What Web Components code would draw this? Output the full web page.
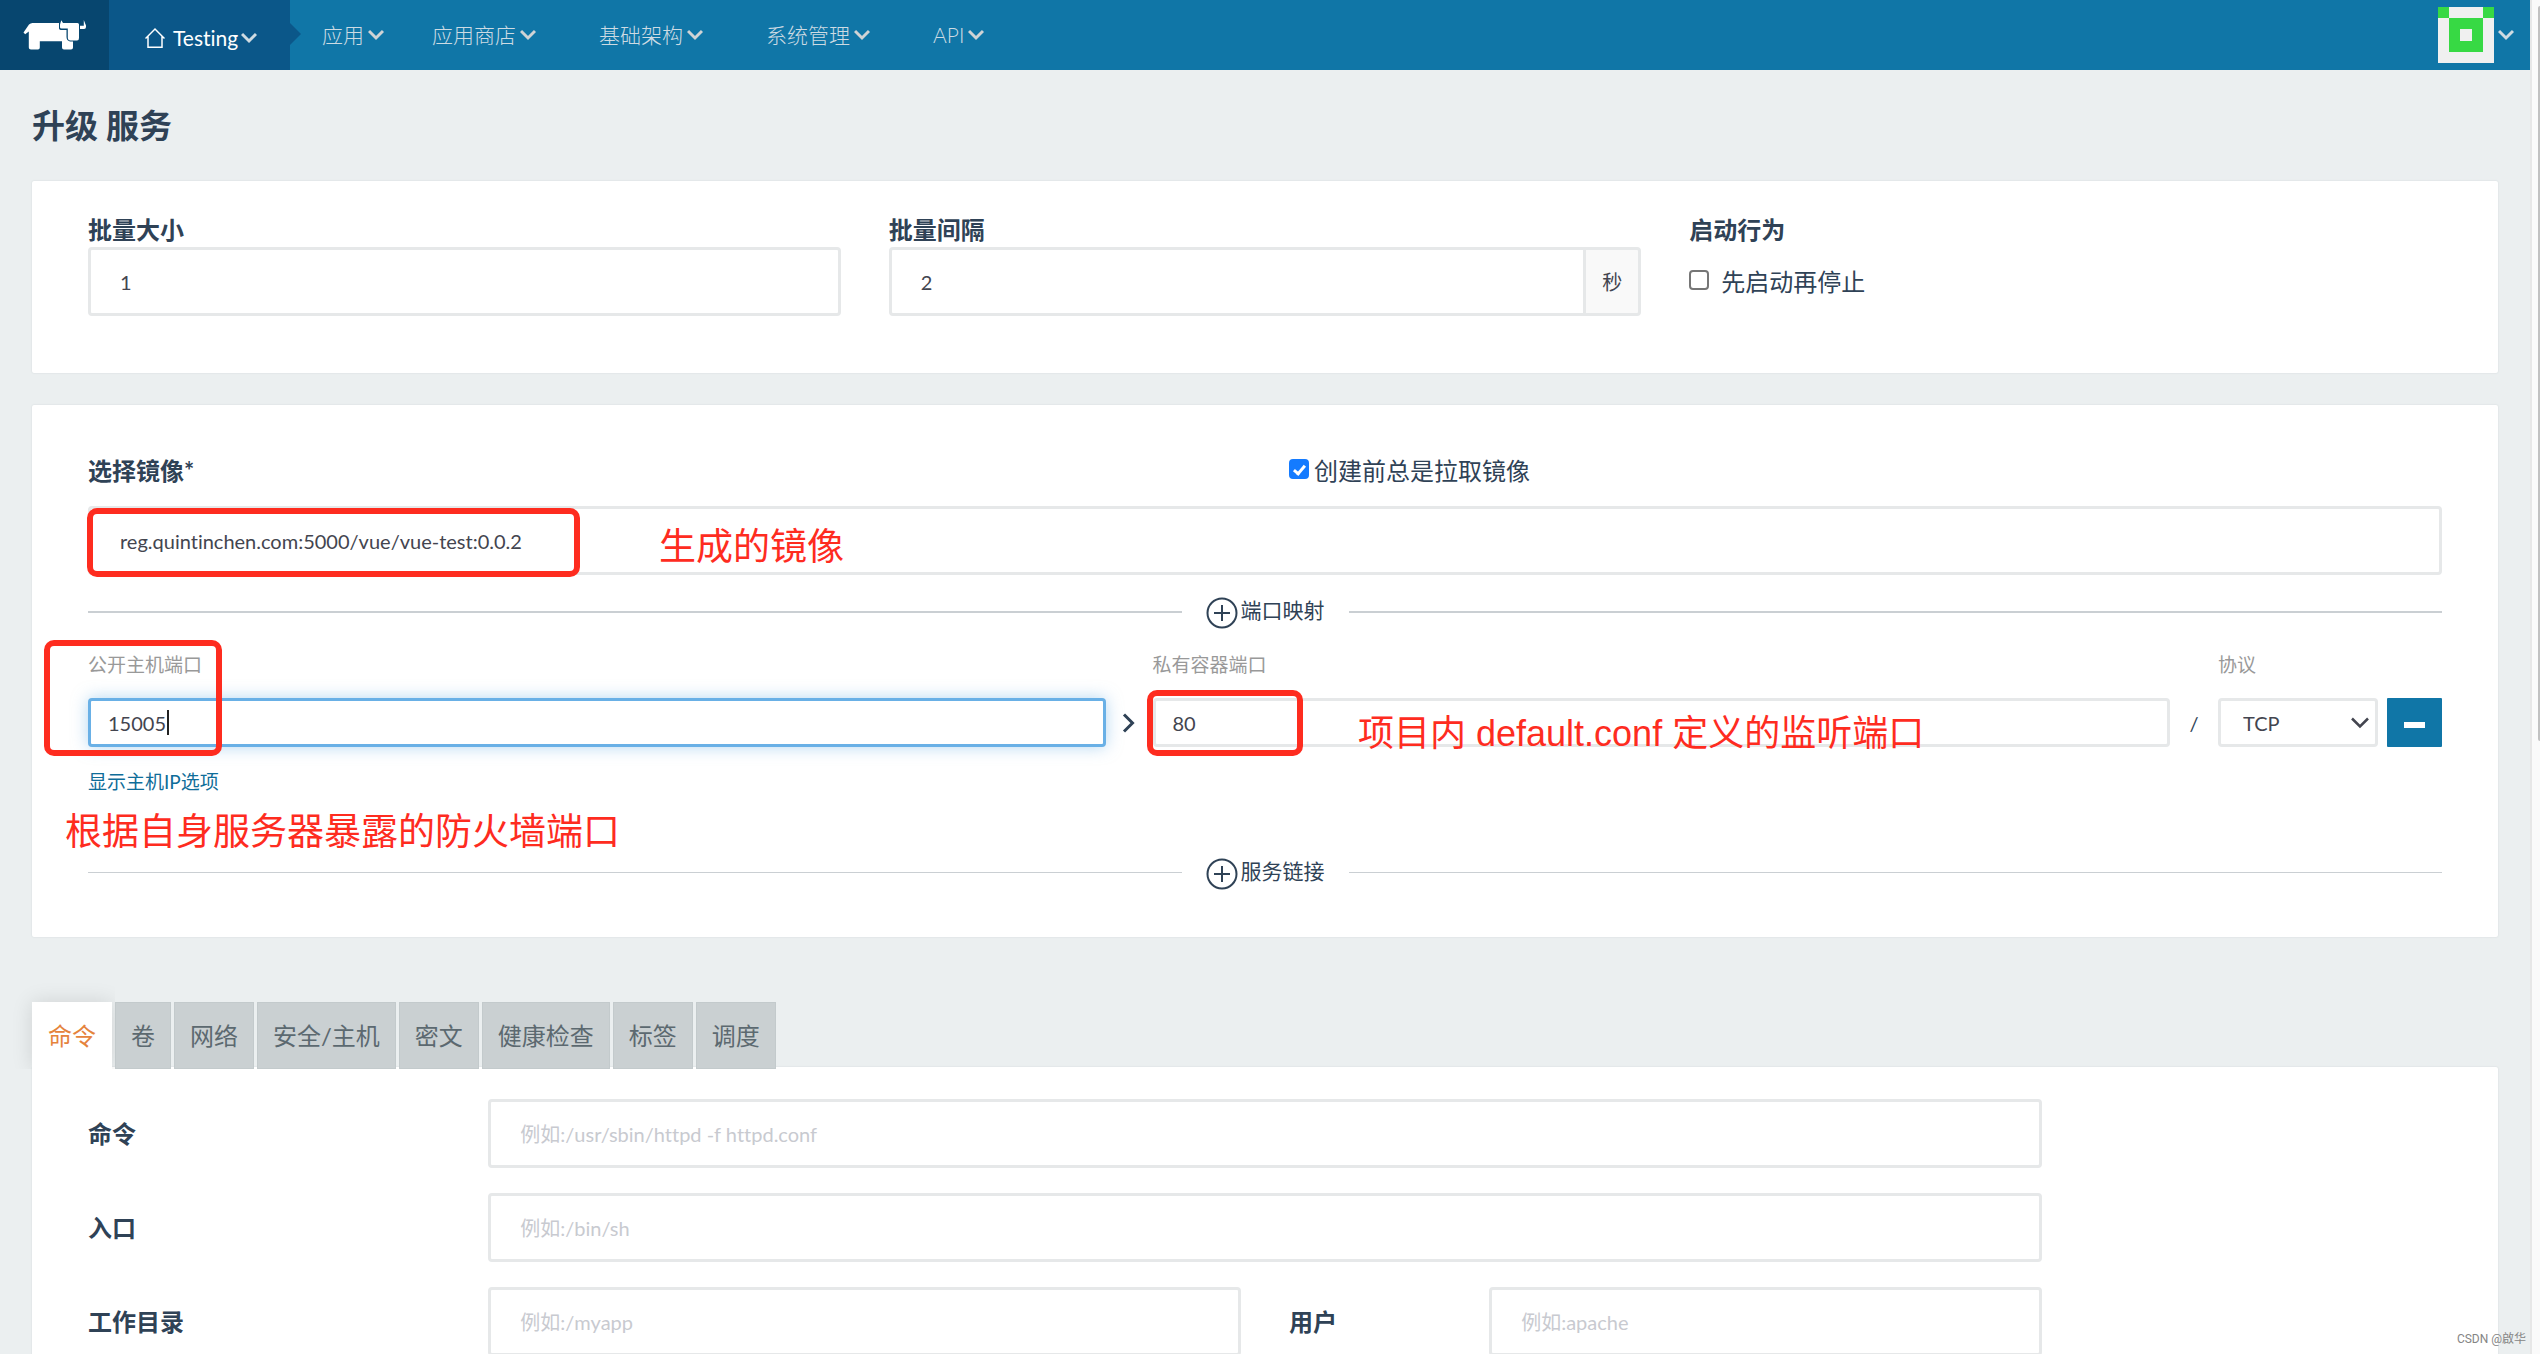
<!DOCTYPE html>
<html lang="zh-CN">
<head>
<meta charset="utf-8">
<title>升级 服务</title>
<style>
  html, body { margin: 0; height: 100%; }
  body {
    font-family: Lato, "Noto Sans CJK SC", sans-serif;
    font-size: 24px;
    line-height: 32px;
    font-variant-ligatures: none;
    color: #2f4256;
    background: #ebeff0;
    overflow: hidden;
  }
</style>
</head>
<body>
<upgrade-page></upgrade-page>

<script>
const BASE = `
  *, *::before, *::after { box-sizing: border-box; }
  input, button, select { font: inherit; font-variant-ligatures: none; color: inherit; margin: 0; }
  svg { display: block; flex: none; }
`;

function define(name, render) {
  customElements.define(name, class extends HTMLElement {
    constructor() {
      super();
      this.attachShadow({ mode: 'open' });
    }
    connectedCallback() {
      const tpl = document.createElement('template');
      tpl.innerHTML = `<style>${BASE}</style>` + render(this);
      this.shadowRoot.replaceChildren(tpl.content.cloneNode(true));
    }
  });
}

/* Down arrow used by every menu in the navigation bar */
define('chevron-down', () => `
  <style>:host { display: block; } path { fill: none; stroke: currentColor; stroke-width: 3; }</style>
  <svg width="16" height="12" viewBox="0 0 16 12" aria-hidden="true"><path d="M1 2l7 7 7-7"/></svg>
`);

define('brand-logo', () => `
  <style>
    :host { display: flex; }
    a { display: flex; align-items: center; justify-content: center; width: 109px; background: #07466f; }
  </style>
  <a href="#" aria-label="首页">
    <svg width="64" height="32" viewBox="0 0 64 32">
      <path fill="#fff" d="M0.500 13.500L6 5.500Q7.500 4 9.500 4H36V9.500Q36.500 11 38 11H43.500V18Q43.500 21.500 47 22.500H50V28.500Q50 30.500 48 30.500H41Q39 30.500 39 28.500V22.200H16.800V28.500Q16.800 30.500 15 30.500H8Q5.800 30.500 5.800 28.500V12.500L2.200 15.300Z"/>
      <path fill="#fff" d="M38.300 1.200L37 5.500V8.200Q37 9.500 38.500 9.500H44.800V18.500Q44.800 21.500 47.500 21.500H54Q56 21.500 56 19V5.500Q56 4 54.500 4H40Z"/>
      <path fill="#fff" d="M60.800 1L63 6.500V8Q63 10 61 10H57V6.800H60.800Z"/>
    </svg>
  </a>
`);

define('env-menu', () => `
  <style>
    :host { display: flex; position: relative; }
    :host::after {
      content: ""; position: absolute; left: 100%; top: 23px;
      border: 11px solid transparent; border-left-color: #0b5789; border-right-width: 0;
    }
    button {
      display: flex; align-items: center; border: 0; background: #0b5789; color: #fff;
      width: 181px; padding: 6px 0 0 36px; font-size: 21px; line-height: 26px; white-space: nowrap;
    }
    svg { margin-right: 8px; }
    chevron-down { margin-left: 3px; color: #cfdbe2; }
  </style>
  <button type="button">
    <svg width="20" height="22" viewBox="0 0 20 22" fill="none" stroke="#fff" stroke-width="1.500" aria-hidden="true">
      <path d="M0.500 11.500L10 2l9.500 9.500M3 9.500V20.200H17V9.500"/>
    </svg>
    Testing<chevron-down></chevron-down>
  </button>
`);

define('nav-menu', () => `
  <style>
    :host { display: block; }
    button {
      display: flex; align-items: center; gap: 4px; border: 0; padding: 0; background: none;
      color: #cddbe3; font-size: 21px; line-height: 30px; white-space: nowrap; font-weight: 300;
    }
    chevron-down { color: #d0d3d5; }
  </style>
  <button type="button"><slot></slot><chevron-down></chevron-down></button>
`);

define('user-menu', () => `
  <style>
    :host { display: flex; margin-left: auto; padding-right: 16px; align-items: center; }
    button { display: flex; align-items: center; gap: 4px; border: 0; padding: 0; background: none; color: #cfdbe2; }
  </style>
  <button type="button" aria-label="用户菜单">
    <svg width="56" height="56" viewBox="0 0 56 56">
      <path fill="#f0f0f0" d="M0 0h56v56H0z"/>
      <path fill="#37d944" d="M0 0h11v11H0zM45 0h11v11H45zM11 11h34v34H11zM22 22v12h12V22z" fill-rule="evenodd"/>
    </svg>
    <chevron-down></chevron-down>
  </button>
`);

define('nav-bar', () => `
  <style>
    :host { display: flex; height: 70px; background: #1076a7; }
    nav { display: flex; align-items: center; gap: 63px; padding: 0 0 0 32px; }
    .main { display: flex; gap: 48px; }
  </style>
  <brand-logo></brand-logo>
  <env-menu></env-menu>
  <nav>
    <div class="main"><nav-menu>应用</nav-menu><nav-menu>应用商店</nav-menu></div>
    <nav-menu>基础架构</nav-menu>
    <nav-menu>系统管理</nav-menu>
    <nav-menu>API</nav-menu>
  </nav>
  <user-menu></user-menu>
`);

define('page-card', () => `
  <style>
    :host {
      display: block; position: relative; background: #fff; border-radius: 2px;
      box-shadow: 0 0 2px rgba(60, 80, 90, .14);
    }
  </style>
  <slot></slot>
`);

/* Text box with its label. mode="row" makes label and box two cells of the outer grid;
   size="small" is the compact box with the grey caption. */
define('text-field', (el) => {
  const a = (n) => el.getAttribute(n) || '';
  return `
  <style>
    :host { display: block; }
    :host([mode="row"]) { display: contents; }
    label { display: block; font-weight: 700; padding-bottom: 1px; }
    :host([mode="row"]) label { align-self: center; grid-column: span var(--label-span, 2); padding: 0; }
    .box { display: flex; position: relative; }
    :host([mode="row"]) .box { grid-column: span var(--box-span, 8); }
    input {
      flex: 1; min-width: 0; height: 69px; padding: 0 29px; font-size: 20px; line-height: 28px;
      color: #43454f; background: #fff; border: 3px solid #e6e8e9; border-radius: 4px; outline: 0;
    }
    input::placeholder { color: #c8cad0; opacity: 1; }
    .addon {
      display: flex; align-items: center; justify-content: center; width: 58px; margin-left: -3px;
      font-size: 20px; color: #43454f; background: #f9f9f9; border: 3px solid #e6e8e9; border-radius: 0 4px 4px 0;
    }
    :host([unit]) input { border-radius: 4px 0 0 4px; }
    :host([size="small"]) label { font-size: 19px; line-height: 24px; font-weight: 400; color: #999; margin-bottom: 21px; padding: 0; }
    :host([size="small"]) input { height: 49px; padding: 0 17px; }
    :host([active]) input { border-color: #69b0e6; box-shadow: 0 0 16px rgba(105, 176, 230, .5); }
    .caret { position: absolute; left: 79px; top: 12px; width: 2px; height: 25px; background: #222; }
  </style>
  ${a('label') ? `<label for="f">${a('label')}</label>` : ''}
  <div class="box">
    <input id="f" type="text" value="${a('value')}" placeholder="${a('placeholder')}"
      ${a('name') ? `aria-label="${a('name')}"` : ''}>
    ${a('unit') ? `<span class="addon">${a('unit')}</span>` : ''}
    ${el.hasAttribute('active') ? '<span class="caret"></span>' : ''}
  </div>`;
});

define('check-option', (el) => `
  <style>
    :host { display: block; }
    label { display: flex; align-items: center; gap: var(--check-gap, 5px); width: max-content; }
    input {
      appearance: none; width: 20px; height: 20px; margin-bottom: 5px; background: #fff;
      border: 2px solid #767676; border-radius: 4px; display: grid;
    }
    input:checked { background: #147bff; border-color: #147bff; }
    input:checked::before {
      content: ""; width: 7px; height: 12px; place-self: center;
      border: solid #fff; border-width: 0 3px 3px 0; transform: rotate(40deg);
    }
  </style>
  <label><input type="checkbox" ${el.hasAttribute('checked') ? 'checked' : ''}><slot></slot></label>
`);

define('section-rule', () => `
  <style>
    :host { display: flex; align-items: center; gap: 24px; }
    :host::before, :host::after { content: ""; flex: 1; height: var(--rule, 2px); background: #cacfd3; }
    button { display: flex; align-items: center; gap: 3px; border: 0; padding: 0; background: none; font-size: 21px; line-height: 28px; }
    span { padding-bottom: 4px; }
    svg { margin-top: 3px; }
  </style>
  <button type="button">
    <svg width="32" height="32" viewBox="0 0 32 32" fill="none" stroke="#2f4256" stroke-width="2" aria-hidden="true">
      <circle cx="16" cy="16" r="14.500"/><path d="M8 16h16M16 8v16"/>
    </svg>
    <span><slot></slot></span>
  </button>
`);

define('port-row', () => `
  <style>
    :host { display: grid; grid-template-columns: 1fr 47px 1fr 48px 160px 64px; align-items: end; }
    .mark { height: 49px; display: flex; align-items: center; justify-content: center; font-size: 20px; }
    label { display: block; font-size: 19px; line-height: 24px; color: #999; margin-bottom: 21px; }
    .pick { position: relative; }
    select {
      display: block; appearance: none; width: 100%; height: 49px; padding: 0 22px; font-size: 20px; color: #43454f;
      background: #fff; border: 3px solid #e6e8e9; border-radius: 4px;
    }
    .pick svg { position: absolute; right: 9px; bottom: 18px; pointer-events: none; }
    button {
      justify-self: end; width: 55px; height: 49px; border: 0; border-radius: 1px; background: #1076a7;
      display: flex; align-items: center; justify-content: center; padding: 4px 0 0;
    }
  </style>
  <text-field size="small" active label="公开主机端口" value="15005"></text-field>
  <span class="mark"><svg width="14" height="20" viewBox="0 0 14 20" fill="none" stroke="#2f4256" stroke-width="3"><path d="M2 1.500l8.500 8.500L2 18.500"/></svg></span>
  <text-field size="small" label="私有容器端口" value="80"></text-field>
  <span class="mark">/</span>
  <div>
    <label for="proto">协议</label>
    <div class="pick">
      <select id="proto"><option>TCP</option><option>UDP</option></select>
      <svg width="18" height="12" viewBox="0 0 18 12" fill="none" stroke="#43454f" stroke-width="2.500"><path d="M1 1.500l8 8 8-8"/></svg>
    </div>
  </div>
  <button type="button" aria-label="删除"><svg width="21" height="6"><path fill="#fff" d="M0 0h21v6H0z"/></svg></button>
`);

define('tab-strip', (el) => `
  <style>
    :host { display: flex; gap: 3px; margin-bottom: -2px; position: relative; z-index: 1; }
    button {
      height: 67px; padding: 0 15px; border: 1px solid #c3cacc; background: #cad0d2; color: #5c6970;
      line-height: 32px; white-space: nowrap;
    }
    button[aria-selected="true"] {
      background: #fff; border-color: #fff; color: #e5833c; box-shadow: 0 0 20px rgba(0, 0, 0, .12);
      clip-path: inset(-24px -3px 0 -24px);
    }
  </style>
  ${el.getAttribute('tabs').split('|').map((t, i) =>
    `<button type="button" role="tab" aria-selected="${i === 0}">${t}</button>`).join('')}
`);

/* Red annotations: a rounded frame and a line of text */
define('red-frame', () => `
  <style>
    :host { position: absolute; border: 6px solid #fe2c1f; border-radius: 10px; pointer-events: none; box-sizing: border-box; }
  </style>
`);
define('red-note', () => `
  <style>
    :host {
      position: absolute; color: #fe2c1f; font-family: "Liberation Sans", "Noto Sans CJK SC", sans-serif;
      font-size: 37px; line-height: 48px; white-space: nowrap; pointer-events: none;
    }
    :host([mixed]) { font-size: 36px; }
  </style>
  <slot></slot>
`);

define('scroll-rail', () => `
  <style>
    :host { display: block; width: 10px; background: #fafafa; border-left: 2px solid #e7e7e7; padding: 6px 0 0 6px; box-sizing: border-box; }
    div { height: 735px; background: #c1c1c1; border-radius: 2px 0 0 2px; }
  </style>
  <div></div>
`);

define('upgrade-page', () => `
  <style>
    :host { display: flex; height: 100vh; position: relative; }
    .app { flex: 1; min-width: 0; overflow: hidden; }
    main { padding: 0 32px; }
    h1 { margin: 0; padding: 35px 0 36px; font-size: 33px; line-height: 40px; font-weight: 700; }
    page-card { padding: 0 56px; }
    .batch { display: grid; grid-template-columns: repeat(3, 1fr); gap: 48px; padding-top: 33px; height: 192px; box-sizing: border-box; }
    .batch h2 { margin: 0 0 20px; font-size: 24px; line-height: 32px; font-weight: 700; }
    .batch check-option { --check-gap: 12px; }
    .image { margin-top: 32px; padding-top: 50px; padding-bottom: 47px; }
    .head { display: grid; grid-template-columns: 1fr 1fr; gap: 48px; margin-bottom: 19px; }
    .image section-rule { margin: 19px 0 24px; }
    .link { display: block; width: max-content; margin-top: 23px; font-size: 19px; line-height: 24px; color: #0f6d99; text-decoration: none; }
    .image section-rule.last { --rule: 1px; margin: 61px 0 0; }
    tab-strip { margin-top: 65px; }
    .command { display: grid; grid-template-columns: repeat(12, 1fr); gap: 25px 48px; padding-top: 32px; padding-bottom: 48px; }
    .full { grid-column: 1 / -1; display: grid; grid-template-columns: subgrid; }
    .mark {
      position: absolute; right: 14px; bottom: 6px; font: 12px/18px Roboto, "Noto Sans CJK SC", sans-serif;
      color: #858585;
    }
  </style>
  <div class="app">
    <nav-bar></nav-bar>
    <main>
      <h1>升级 服务</h1>
      <page-card class="batch">
        <text-field label="批量大小" value="1"></text-field>
        <text-field label="批量间隔" value="2" unit="秒"></text-field>
        <div>
          <h2>启动行为</h2>
          <check-option>先启动再停止</check-option>
        </div>
      </page-card>

      <page-card class="image">
        <div class="head">
          <strong>选择镜像*</strong>
          <check-option checked>创建前总是拉取镜像</check-option>
        </div>
        <text-field name="选择镜像" value="reg.quintinchen.com:5000/vue/vue-test:0.0.2"></text-field>
        <section-rule>端口映射</section-rule>
        <port-row></port-row>
        <a class="link" href="#">显示主机IP选项</a>
        <section-rule class="last">服务链接</section-rule>

        <red-frame style="left:55px;top:103px;width:493px;height:69px"></red-frame>
        <red-frame style="left:12px;top:235px;width:178px;height:116px"></red-frame>
        <red-frame style="left:1115px;top:285px;width:156px;height:66px"></red-frame>
        <red-note style="left:627px;top:119px">生成的镜像</red-note>
        <red-note style="left:33px;top:404px">根据自身服务器暴露的防火墙端口</red-note>
        <red-note mixed style="left:1326px;top:305px">项目内 default.conf 定义的监听端口</red-note>
      </page-card>

      <tab-strip role="tablist" tabs="命令|卷|网络|安全/主机|密文|健康检查|标签|调度"></tab-strip>
      <page-card class="command">
        <div class="full"><text-field mode="row" label="命令" placeholder="例如:/usr/sbin/httpd -f httpd.conf"></text-field></div>
        <div class="full"><text-field mode="row" label="入口" placeholder="例如:/bin/sh"></text-field></div>
        <div class="full">
          <text-field mode="row" style="--box-span:4" label="工作目录" placeholder="例如:/myapp"></text-field>
          <text-field mode="row" style="--label-span:1;--box-span:3" label="用户" placeholder="例如:apache"></text-field>
        </div>
      </page-card>
    </main>
  </div>
  <scroll-rail></scroll-rail>
  <span class="mark">CSDN @啟华</span>
`);
</script>
</body>
</html>
